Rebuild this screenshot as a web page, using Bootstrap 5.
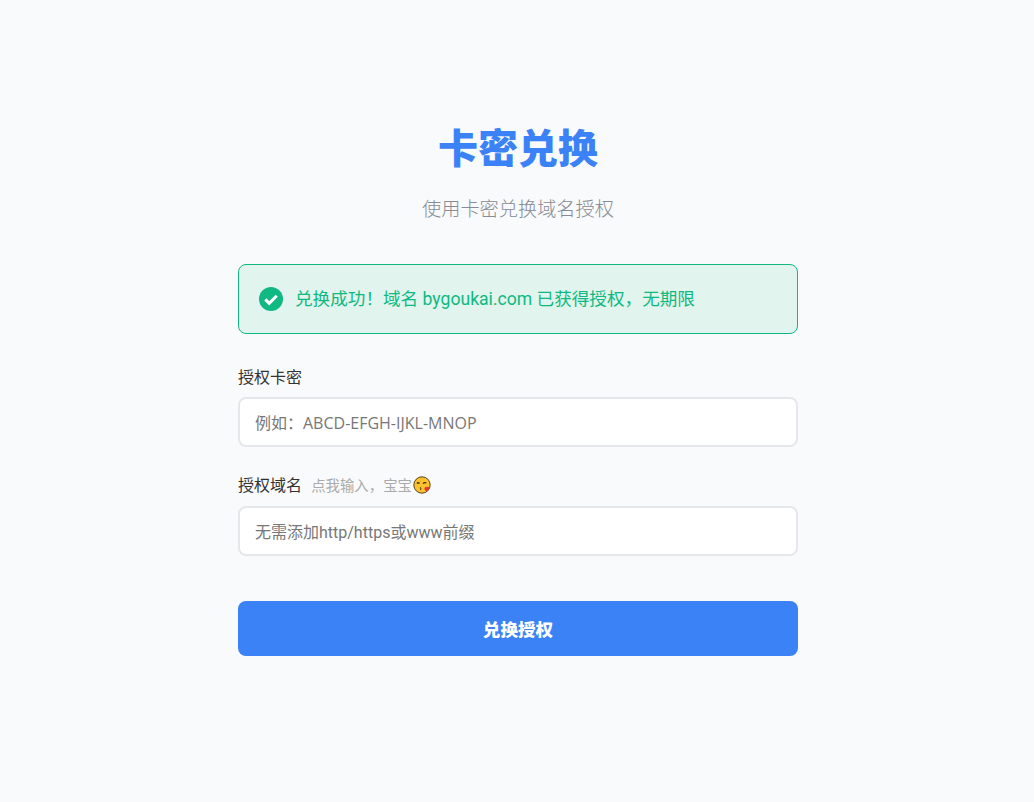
<!DOCTYPE html>
<html lang="zh-CN">
<head>
<meta charset="utf-8">
<title>卡密兑换</title>
<link href="https://cdn.jsdelivr.net/npm/bootstrap@5.3.0/dist/css/bootstrap.min.css" rel="stylesheet">
<style>
body{background:#f9fafb;font-family:"Open Sans","Noto Sans CJK SC",sans-serif;color:#333;min-height:802px;overflow:hidden}
.redeem-wrap{width:560px;margin-left:238px;padding-top:118px}
.redeem-title{font-size:40px;line-height:60px;font-weight:900;color:#3b82f6;margin:0 0 16px}
.redeem-sub{font-size:19.2px;line-height:29px;color:#868b95;margin:0 0 41px;font-weight:300}
.redeem-alert{display:flex;align-items:center;gap:12px;height:70px;padding:0 20px;margin:0 0 31px;background:#e1f4ee;border:1px solid #10b981;border-radius:8px;color:#10b981;font-size:17.6px;font-family:Roboto,"Noto Sans CJK SC",sans-serif}
.redeem-label{display:block;font-size:16px;line-height:24px;height:24px;color:#333;margin-bottom:8px}
.redeem-hint{font-size:14.4px;color:#aaa;margin-left:5px}
.redeem-input{height:50px;border:2px solid #e5e7eb;border-radius:8px;padding:2px 15px 0;font-size:16px;background:#fff}
.redeem-input::placeholder{color:#777}
#domainName{font-family:Roboto,"Noto Sans CJK SC",sans-serif}
.redeem-field{margin-bottom:26px}
.redeem-field-last{margin-bottom:45px}
.redeem-field-last .redeem-label{margin-bottom:9px}
.redeem-btn{height:55px;border:0;border-radius:8px;padding-top:8px;background:#3b82f6;color:#fff;font-size:17.6px;font-weight:900}
.redeem-btn:hover{background:#3b82f6;color:#fff}
.kiss{vertical-align:-3px;margin-left:1px}
</style>
</head>
<body>
<main class="redeem-wrap">
  <h1 class="redeem-title text-center">卡密兑换</h1>
  <p class="redeem-sub text-center">使用卡密兑换域名授权</p>
  <div class="redeem-alert" role="alert">
    <svg width="24" height="24" viewBox="0 0 24 24" aria-hidden="true"><circle cx="12" cy="12" r="12" fill="#10b981"/><path d="M6.300 12.400l3.900 3.900 7.500-7.600" fill="none" stroke="#fff" stroke-width="3"/></svg>
    <span>兑换成功！域名 bygoukai.com 已获得授权，无期限</span>
  </div>
  <form>
    <div class="redeem-field">
      <label class="redeem-label" for="cardKey">授权卡密</label>
      <input id="cardKey" class="form-control redeem-input" placeholder="例如：ABCD-EFGH-IJKL-MNOP">
    </div>
    <div class="redeem-field-last">
      <label class="redeem-label" for="domainName">授权域名 <span class="redeem-hint">点我输入，宝宝</span><svg class="kiss" width="18" height="18" viewBox="0 0 18 18" aria-hidden="true"><circle cx="9" cy="9" r="8.200" fill="#fcc12e" stroke="#4a3512" stroke-width=".9"/><path d="M3.800 7h2.800" fill="none" stroke="#3a2a10" stroke-width="1.500"/><path d="M10 7.600q1.500-1.800 3.400-.6" fill="none" stroke="#3a2a10" stroke-width="1.200"/><path d="M7 11.500q1.500.3 .8 1.100.7.800-.8 1.200" fill="none" stroke="#3a2a10" stroke-width=".9"/><path d="M13.500 11.200c.9-1 2.900-.5 2.600 1.200-.2 1.300-1.700 2.200-2.900 2.600-1-.7-2.200-2-1.600-3.100.4-.9 1.500-1 1.900-.7z" fill="#e5352b"/></svg></label>
      <input id="domainName" class="form-control redeem-input" placeholder="无需添加http/https或www前缀">
    </div>
    <button type="button" class="btn redeem-btn w-100">兑换授权</button>
  </form>
</main>
<script src="https://cdn.jsdelivr.net/npm/bootstrap@5.3.0/dist/js/bootstrap.bundle.min.js"></script>
</body>
</html>
